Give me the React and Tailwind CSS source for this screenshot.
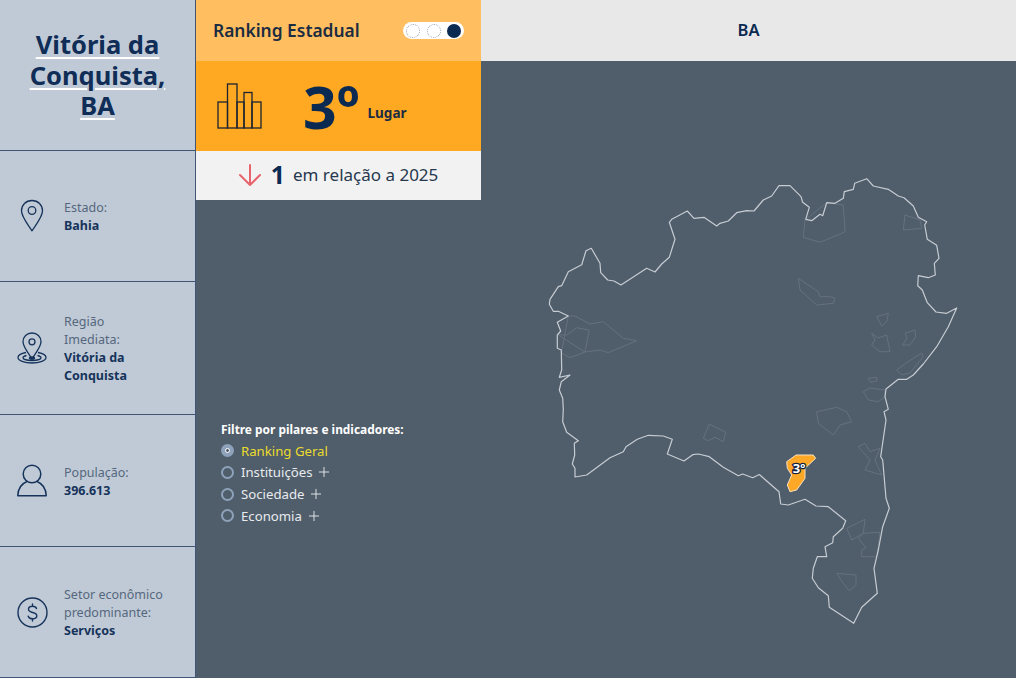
import React from 'react';
import { Plus } from 'lucide-react';

const outline = '563.3,409.3 562.7,398.3 559.3,390 561.3,381.7 570,375 559.3,377.3 561.7,370 561.3,350 557.3,348.3 557.3,335 560.7,331 557.3,322.3 568.3,316 558.3,311.3 553.3,311.3 549.3,304.3 550,299.3 558.3,286.7 561.7,285.7 568.3,271.7 581.7,264.7 586,250.7 591.3,248.3 600,263.3 600.7,272.7 607.7,280 614,281 621,285 646.7,268.3 655,272 661.7,264 669.3,257.3 675,239.3 669.3,222.3 671.7,219.3 687.3,211 694,218.3 704,217.3 716.7,226 720,223.3 728.3,221 736.7,212.7 746.7,210.7 754,211 763.3,200 771.7,196 779,185.7 790,185.7 801,196.7 802.7,202.3 809.3,207.3 805.7,219.3 811.7,220.7 820,214.3 822.7,215.7 826.7,202.7 835,203.3 843.3,198.3 844.3,191.7 853.3,189.3 854.7,183.3 866.7,178.7 873.3,186 888.3,189.3 898.3,196 904,197.7 913.3,206 918.3,217.3 926.7,221.7 924.7,225 927.3,239.3 936.7,245.3 939,258.3 934.3,263.3 935.3,275 928.3,277.7 918.3,275.7 917.7,285.7 922.3,290 927.3,302.7 936,312 946.7,313.3 956.7,308 948.3,326.7 936.7,346.7 923.3,364 913.3,375 906.7,379.3 898.3,379.3 886,389 885,396.7 888.3,409.3 884,411.7 886,420 880.7,456.7 882.7,460 886,498.3 889.3,508.3 882.7,526.7 878.3,550 874,568.3 877.3,593.3 861.7,607.3 853.7,623.3 829.3,607.3 828.3,595.7 818.3,587.7 812.3,578.3 813.3,568.3 817.3,556.7 826.7,556.7 825,546.7 832.7,542.7 833.3,536.7 842.7,528.3 845.7,520.7 828.3,506.7 816,506 805,499.3 788.3,505 780.7,504 779,491.7 759.3,474.5 752.7,477.7 742.7,474 738.3,475.7 723.3,467.3 709.3,456.7 698.3,454 692.7,454.7 684,461 667.3,454 672.3,439.3 663.3,436 648.3,435.3 637.3,439.3 626,446.7 623.3,451.7 610,457.7 586.7,475 575,477 575,468.3 572.3,464 574.7,455 574.3,443.3 578.3,440.7 566.7,432.3 562.7,421.7';

const regions = [
  '568.3,316 575,316 590,324 603.3,321.7 623.3,338.3 636.7,340.7 608.3,352.7 600,350 585,352 570,357.7 561.3,353',
  '558.3,335 566.7,335 576.7,327.7 589.3,330 585,352',
  '826.7,202.7 843.3,205 845,231.7 840,234 820,242.3 803.3,237.3 805,220',
  '905,215 920,220 921.7,228.3 903.3,230',
  '798.3,278.3 800,290 816.7,305 833.3,303.3 835,298.3 830,296.7 820,296.7 818.3,291.7',
  '876.7,316.7 888.3,313.3 886.7,321.7 881.7,326',
  '871.7,333.3 878,338 886.7,335 890,351.7 880,351.7 871.7,345 875,340',
  '905,333.3 915,330 915.7,336.7 910,345 902.7,345 907,338',
  '896.7,370 906,363 921.7,353 923,357 910,373 901.7,375',
  '868.3,378.3 876.7,377.3 876.7,381 870.7,382.3',
  '863.3,391.7 870,388 885,390 885,396.7 878.3,401.7 868.3,400',
  '709.3,424 725.7,432.3 723.3,441.7 715,437.3 708.3,440.7 703.3,438.3',
  '816.7,411.7 836.7,407.3 846.7,411.7 851.7,421.7 840,425 833.3,435 818.3,423.3',
  '858.3,446.7 865,443.3 870,451.7 880,448.3 875,460 881.7,475 865,470 870,460',
  '846.7,528.3 865,519.3 863.3,533.3 851.7,540',
  '863.3,533.3 880,532.3 876.7,556.7 861.7,556.7 861.7,550 866,548 858.3,538.3',
  '836.7,573.3 856,575 856,585 849.3,590.7 843.3,583.3',
];

const highlight = '786.7,461.7 796,455 813.3,455 815.7,458.3 805,468.3 805,478.3 796.7,490 790,491.7 787.3,485 791.7,475 787.3,468.3';

function BahiaMap() {
  return (
    <svg viewBox="481 61 535 617" className="w-full flex-1 min-h-0 block" fill="none">
      {regions.map((points, i) => (
        <polygon key={i} points={points} stroke="#65717e" strokeWidth="1" strokeLinejoin="round" />
      ))}
      <polygon points={outline} stroke="#c6ccd3" strokeWidth="1.2" strokeLinejoin="round" />
      <polygon points={highlight} fill="#ffa726" stroke="#f6e2bf" strokeWidth="1" strokeLinejoin="round" />
      <text
        x="799"
        y="473"
        textAnchor="middle"
        fontSize="13"
        fontWeight="700"
        fill="#ffffff"
        stroke="#15233a"
        strokeWidth="2.5"
        paintOrder="stroke"
      >
        3º
      </text>
    </svg>
  );
}

function PinIcon() {
  return (
    <svg width="24" height="34" viewBox="0 0 24 34" fill="none" stroke="#16335b" strokeWidth="1.3">
      <path d="M12 1.5C5.9 1.5 1.5 6 1.5 11.8c0 6.2 6.6 14 10.5 20 3.9-6 10.5-13.8 10.5-20C22.5 6 18.1 1.5 12 1.5Z" strokeLinejoin="round" />
      <circle cx="12" cy="11.5" r="3.8" />
    </svg>
  );
}

function TargetPinIcon() {
  return (
    <svg width="30" height="32" viewBox="0 0 30 32" fill="none" stroke="#16335b" strokeWidth="1.3">
      <path d="M15 1C9.8 1 6 4.8 6 9.8c0 5 5.5 11.5 9 17.2 3.5-5.7 9-12.2 9-17.2C24 4.8 20.2 1 15 1Z" strokeLinejoin="round" />
      <circle cx="15" cy="9.8" r="3" />
      <path d="M9 20.5C4.2 21.4 1 23.2 1 25.5 1 28.5 7.3 31 15 31s14-2.5 14-5.5c0-2.3-3.2-4.1-8-5" />
      <path d="M9.5 23.5c-2 .5-3.5 1.2-3.5 2.2 0 1.5 4 2.8 9 2.8s9-1.3 9-2.8c0-1-1.5-1.7-3.5-2.2" />
      <ellipse cx="15" cy="26" rx="2.5" ry="1.2" fill="#16335b" />
    </svg>
  );
}

function UserIcon() {
  return (
    <svg width="30" height="33" viewBox="0 0 30 33" fill="none" stroke="#16335b" strokeWidth="1.5">
      <circle cx="15" cy="10" r="8.8" />
      <path d="M10 17.5C5 19.5 1 24.5 .8 31.8h28.4C29 24.5 25 19.5 20 17.5" strokeLinejoin="round" />
    </svg>
  );
}

function DollarIcon() {
  return (
    <svg width="31" height="31" viewBox="0 0 31 31" fill="none" stroke="#16335b" strokeWidth="1.4">
      <circle cx="15.5" cy="15.5" r="14.5" />
      <path d="M19.5 11.5c-.5-1.5-2-2.3-4-2.3-2.3 0-4 1.2-4 3 0 4.3 8.3 2.3 8.3 6.5 0 1.900-1.800 3.100-4.300 3.100-2.200 0-3.800-1-4.300-2.600M15.500 7v2.200M15.500 21.800V24" strokeLinecap="round" />
    </svg>
  );
}

function BarsIcon() {
  return (
    <svg width="47" height="46" viewBox="0 0 47 46" fill="none" stroke="#1c2430" strokeWidth="1.3">
      <rect x="1" y="19" width="9.5" height="26" />
      <rect x="10.5" y="1" width="9.5" height="44" />
      <rect x="20" y="19" width="7" height="26" />
      <rect x="27" y="9.5" width="8" height="35.5" />
      <rect x="35" y="19" width="9" height="26" />
    </svg>
  );
}

function ArrowDownIcon() {
  return (
    <svg width="24" height="24" viewBox="0 0 24 24" fill="none" stroke="#e8636c" strokeWidth="2" strokeLinecap="round" strokeLinejoin="round">
      <path d="M12 2v20M2 12l10 10 10-10" />
    </svg>
  );
}

function InfoRow({ icon, label, value, className }) {
  return (
    <div className={`flex items-center border-t border-[#3f5573] ${className}`}>
      <div className="w-[64px] shrink-0 flex justify-center">{icon}</div>
      <div className="w-[110px] pt-[2px] text-[12.5px] leading-[18px]">
        {label.map((line) => (
          <div key={line} className="text-[#55677d]">{line}</div>
        ))}
        {value.map((line) => (
          <div key={line} className="font-bold text-[#16335b]">{line}</div>
        ))}
      </div>
    </div>
  );
}

function FilterOption({ label, active, hasPlus }) {
  return (
    <div className="flex items-center h-[21.67px]">
      <span className={`w-[13px] h-[13px] rounded-full border-2 border-[#8ea3bb] flex items-center justify-center mr-[7px] ${active ? 'bg-[#8ea3bb]' : ''}`}>
        {active && <span className="w-[5px] h-[5px] rounded-full bg-[#505d6a] border border-white" />}
      </span>
      <span className={active ? 'text-[#ebdc2c]' : 'text-[#e8ebee]'}>{label}</span>
      {hasPlus && <Plus size={16} strokeWidth={1.3} className="ml-[4px] text-[#f1f3f5]" />}
    </div>
  );
}

export default function App() {
  return (
    <div className="w-[1016px] h-[680px] bg-white overflow-hidden font-['Noto_Sans',sans-serif]">
      <div className="flex h-[678px]">
        {/* left info column */}
        <aside className="w-[196px] shrink-0 flex flex-col bg-[#c0cad6] border-r border-[#3f5573]">
          <div className="h-[150px] flex items-center justify-center text-center">
            <h1 className="w-[174px] text-[25.5px] leading-[30.5px] font-bold text-[#0f2d57] underline decoration-white decoration-2 underline-offset-[3px]">
              Vitória da Conquista, BA
            </h1>
          </div>
          <InfoRow className="h-[131px]" icon={<PinIcon />} label={['Estado:']} value={['Bahia']} />
          <InfoRow className="h-[133px]" icon={<TargetPinIcon />} label={['Região', 'Imediata:']} value={['Vitória da', 'Conquista']} />
          <InfoRow className="h-[132px]" icon={<UserIcon />} label={['População:']} value={['396.613']} />
          <InfoRow className="h-[132px] border-b" icon={<DollarIcon />} label={['Setor econômico', 'predominante:']} value={['Serviços']} />
        </aside>

        <div className="flex-1 flex bg-[#505d6a]">
          {/* ranking card and filters */}
          <div className="w-[285px] shrink-0 flex flex-col">
            <div className="h-[61px] bg-[#ffbe5f] flex items-center justify-between pl-[17px] pr-[17px]">
              <span className="text-[17.4px] font-semibold text-[#1b2c42]">Ranking Estadual</span>
              <div className="w-[61px] h-[17px] bg-white rounded-full flex items-center justify-between px-[3px]">
                <span className="w-[14px] h-[14px] rounded-full border border-dotted border-[#9aa5b1]" />
                <span className="w-[14px] h-[14px] rounded-full border border-dotted border-[#9aa5b1]" />
                <span className="w-[14px] h-[14px] rounded-full bg-[#0b2a52]" />
              </div>
            </div>
            <div className="h-[90px] bg-[#ffa822] flex items-center pl-[21px]">
              <BarsIcon />
              <span className="ml-[39px] text-[59px] leading-none font-bold text-[#0b2a52]">3º</span>
              <span className="ml-[8px] mt-[14px] text-[13.5px] font-bold text-[#1b2c42]">Lugar</span>
            </div>
            <div className="h-[49px] bg-[#f2f2f2] flex items-center justify-center pr-[1px] pb-[2px]">
              <ArrowDownIcon />
              <span className="ml-[9px] text-[25px] leading-none font-bold text-[#0b2a52]">1</span>
              <span className="ml-[8px] text-[17px] text-[#27384e]">em relação a 2025</span>
            </div>

            <div className="mt-[219px] pl-[25px] text-[13.2px] leading-[22px]">
              <div className="text-[11.9px] leading-[21px] font-bold text-white">Filtre por pilares e indicadores:</div>
              <FilterOption label="Ranking Geral" active />
              <FilterOption label="Instituições" hasPlus />
              <FilterOption label="Sociedade" hasPlus />
              <FilterOption label="Economia" hasPlus />
            </div>
          </div>

          {/* state map */}
          <div className="flex-1 flex flex-col min-w-0">
            <div className="h-[61px] shrink-0 bg-[#e8e8e8] flex items-center justify-center text-[16.5px] font-semibold text-[#0b2a52]">
              BA
            </div>
            <BahiaMap />
          </div>
        </div>
      </div>
    </div>
  );
}
